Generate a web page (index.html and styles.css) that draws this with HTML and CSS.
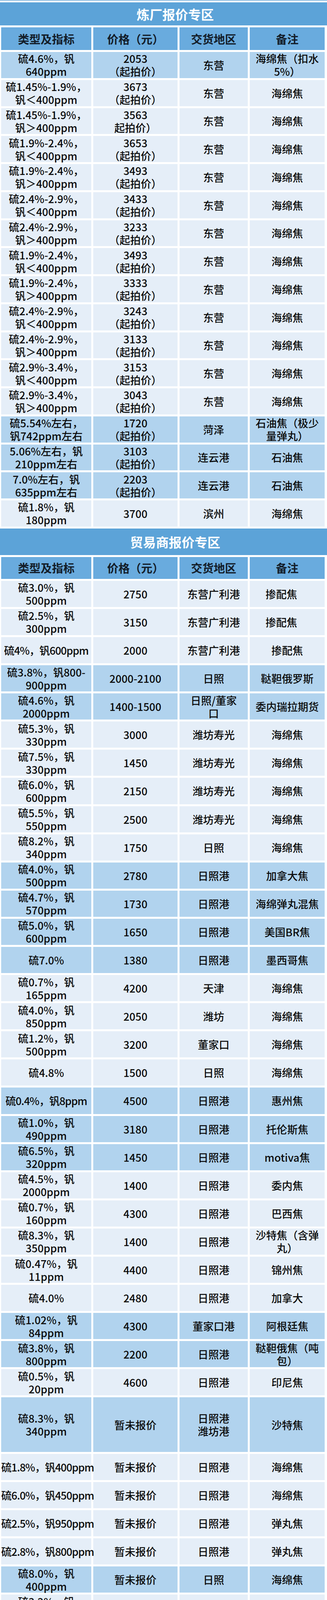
FILE: index.html
```html
<!DOCTYPE html>
<html lang="zh">
<head>
<meta charset="utf-8">
<title>报价专区</title>
<link rel="stylesheet" href="styles.css">
</head>
<body>
<div class="topline"></div>

<section class="sec sec1">
  <div class="title">炼厂报价专区</div>
  <table class="tbl">
    <colgroup><col class="c1"><col class="c2"><col class="c3"><col class="c4"></colgroup>
    <tr class="head"><td>类型及指标</td><td>价格（元）</td><td>交货地区</td><td>备注</td></tr>
    <tr class="b"><td>硫4.6%，钒<br>640ppm</td><td>2053<br>（起拍价）</td><td>东营</td><td>海绵焦（扣水<br>5%）</td></tr>
    <tr class="p"><td>硫1.45%-1.9%，<br>钒＜400ppm</td><td>3673<br>（起拍价）</td><td>东营</td><td>海绵焦</td></tr>
    <tr class="p"><td>硫1.45%-1.9%，<br>钒＞400ppm</td><td>3563<br>起拍价）</td><td>东营</td><td>海绵焦</td></tr>
    <tr class="p"><td>硫1.9%-2.4%，<br>钒＜400ppm</td><td>3653<br>（起拍价）</td><td>东营</td><td>海绵焦</td></tr>
    <tr class="p"><td>硫1.9%-2.4%，<br>钒＞400ppm</td><td>3493<br>（起拍价）</td><td>东营</td><td>海绵焦</td></tr>
    <tr class="p"><td>硫2.4%-2.9%，<br>钒＜400ppm</td><td>3433<br>（起拍价）</td><td>东营</td><td>海绵焦</td></tr>
    <tr class="p"><td>硫2.4%-2.9%，<br>钒＞400ppm</td><td>3233<br>（起拍价）</td><td>东营</td><td>海绵焦</td></tr>
    <tr class="p"><td>硫1.9%-2.4%，<br>钒＜400ppm</td><td>3493<br>（起拍价）</td><td>东营</td><td>海绵焦</td></tr>
    <tr class="p"><td>硫1.9%-2.4%，<br>钒＞400ppm</td><td>3333<br>（起拍价）</td><td>东营</td><td>海绵焦</td></tr>
    <tr class="p"><td>硫2.4%-2.9%，<br>钒＜400ppm</td><td>3243<br>（起拍价）</td><td>东营</td><td>海绵焦</td></tr>
    <tr class="p"><td>硫2.4%-2.9%，<br>钒＞400ppm</td><td>3133<br>（起拍价）</td><td>东营</td><td>海绵焦</td></tr>
    <tr class="p"><td>硫2.9%-3.4%，<br>钒＜400ppm</td><td>3153<br>（起拍价）</td><td>东营</td><td>海绵焦</td></tr>
    <tr class="p"><td>硫2.9%-3.4%，<br>钒＞400ppm</td><td>3043<br>（起拍价）</td><td>东营</td><td>海绵焦</td></tr>
    <tr class="b"><td>硫5.54%左右，<br>钒742ppm左右</td><td>1720<br>（起拍价）</td><td>菏泽</td><td>石油焦（极少<br>量弹丸）</td></tr>
    <tr class="b"><td>5.06%左右，钒<br>210ppm左右</td><td>3103<br>（起拍价）</td><td>连云港</td><td>石油焦</td></tr>
    <tr class="b"><td>7.0%左右，钒<br>635ppm左右</td><td>2203<br>（起拍价）</td><td>连云港</td><td>石油焦</td></tr>
    <tr class="p"><td>硫1.8%，钒<br>180ppm</td><td>3700</td><td>滨州</td><td>海绵焦</td></tr>
  </table>
</section>

<section class="sec sec2">
  <div class="title">贸易商报价专区</div>
  <table class="tbl">
    <colgroup><col class="c1"><col class="c2"><col class="c3"><col class="c4"></colgroup>
    <tr class="head"><td>类型及指标</td><td>价格（元）</td><td>交货地区</td><td>备注</td></tr>
    <tr class="p"><td>硫3.0%，钒<br>500ppm</td><td>2750</td><td>东营广利港</td><td class="shift">掺配焦</td></tr>
    <tr class="p"><td>硫2.5%，钒<br>300ppm</td><td>3150</td><td>东营广利港</td><td class="shift">掺配焦</td></tr>
    <tr class="p"><td class="tight">硫4%，钒600ppm</td><td>2000</td><td>东营广利港</td><td>掺配焦</td></tr>
    <tr class="b"><td>硫3.8%，钒800-<br>900ppm</td><td>2000-2100</td><td>日照</td><td>鞑靼俄罗斯</td></tr>
    <tr class="b"><td>硫4.6%，钒<br>2000ppm</td><td>1400-1500</td><td>日照/董家<br>口</td><td>委内瑞拉期货</td></tr>
    <tr class="p"><td>硫5.3%，钒<br>330ppm</td><td>3000</td><td>潍坊寿光</td><td>海绵焦</td></tr>
    <tr class="p"><td>硫7.5%，钒<br>330ppm</td><td>1450</td><td>潍坊寿光</td><td>海绵焦</td></tr>
    <tr class="p"><td>硫6.0%，钒<br>600ppm</td><td>2150</td><td>潍坊寿光</td><td>海绵焦</td></tr>
    <tr class="p"><td>硫5.5%，钒<br>550ppm</td><td>2500</td><td>潍坊寿光</td><td>海绵焦</td></tr>
    <tr class="p"><td>硫8.2%，钒<br>340ppm</td><td>1750</td><td>日照</td><td>海绵焦</td></tr>
    <tr class="b"><td>硫4.0%，钒<br>500ppm</td><td>2780</td><td>日照港</td><td>加拿大焦</td></tr>
    <tr class="b"><td>硫4.7%，钒<br>570ppm</td><td>1730</td><td>日照港</td><td>海绵弹丸混焦</td></tr>
    <tr class="b"><td>硫5.0%，钒<br>600ppm</td><td>1650</td><td>日照港</td><td>美国BR焦</td></tr>
    <tr class="b"><td>硫7.0%</td><td>1380</td><td>日照港</td><td>墨西哥焦</td></tr>
    <tr class="p"><td>硫0.7%，钒<br>165ppm</td><td>4200</td><td>天津</td><td>海绵焦</td></tr>
    <tr class="p"><td>硫4.0%，钒<br>850ppm</td><td>2050</td><td>潍坊</td><td>海绵焦</td></tr>
    <tr class="p"><td>硫1.2%，钒<br>500ppm</td><td>3200</td><td>董家口</td><td>海绵焦</td></tr>
    <tr class="p"><td>硫4.8%</td><td>1500</td><td>日照</td><td>海绵焦</td></tr>
    <tr class="b"><td class="tight">硫0.4%，钒8ppm</td><td>4500</td><td>日照港</td><td>惠州焦</td></tr>
    <tr class="b"><td>硫1.0%，钒<br>490ppm</td><td>3180</td><td>日照港</td><td>托伦斯焦</td></tr>
    <tr class="b"><td>硫6.5%，钒<br>320ppm</td><td>1450</td><td>日照港</td><td>motiva焦</td></tr>
    <tr class="p"><td>硫4.5%，钒<br>2000ppm</td><td>1400</td><td>日照港</td><td>委内焦</td></tr>
    <tr class="p"><td>硫0.7%，钒<br>160ppm</td><td>4300</td><td>日照港</td><td>巴西焦</td></tr>
    <tr class="p"><td>硫8.3%，钒<br>350ppm</td><td>1400</td><td>日照港</td><td>沙特焦（含弹<br>丸）</td></tr>
    <tr class="p"><td>硫0.47%，钒<br>11ppm</td><td>4400</td><td>日照港</td><td>锦州焦</td></tr>
    <tr class="p"><td>硫4.0%</td><td>2480</td><td>日照港</td><td>加拿大</td></tr>
    <tr class="b"><td>硫1.02%，钒<br>84ppm</td><td>4300</td><td>董家口港</td><td>阿根廷焦</td></tr>
    <tr class="b"><td>硫3.8%，钒<br>800ppm</td><td>2200</td><td>日照港</td><td>鞑靼俄焦（吨<br>包）</td></tr>
    <tr class="p"><td>硫0.5%，钒<br>20ppm</td><td>4600</td><td>日照港</td><td>印尼焦</td></tr>
    <tr class="b tall"><td>硫8.3%，钒<br>340ppm</td><td>暂未报价</td><td>日照港<br>潍坊港</td><td>沙特焦</td></tr>
    <tr class="p"><td class="tight">硫1.8%，钒400ppm</td><td>暂未报价</td><td>日照港</td><td>海绵焦</td></tr>
    <tr class="p"><td class="tight">硫6.0%，钒450ppm</td><td>暂未报价</td><td>日照港</td><td>海绵焦</td></tr>
    <tr class="p"><td class="tight">硫2.5%，钒950ppm</td><td>暂未报价</td><td>日照港</td><td>弹丸焦</td></tr>
    <tr class="p"><td class="tight">硫2.8%，钒800ppm</td><td>暂未报价</td><td>日照港</td><td>弹丸焦</td></tr>
    <tr class="b"><td>硫8.0%，钒<br>400ppm</td><td>暂未报价</td><td>日照</td><td>海绵焦</td></tr>
    <tr class="p"><td>硫3.2%，钒<br>480ppm</td><td>暂未报价</td><td>日照港</td><td>海绵焦</td></tr>
  </table>
</section>

<div class="bottomline"></div>
</body>
</html>
```

FILE: styles.css
```css
html, body {
  margin: 0;
  padding: 0;
  background: #ffffff;
}

body {
  width: 838px;
  font-family: "Noto Sans CJK SC", "Noto Sans", sans-serif;
  color: #0a0a0a;
}

.topline {
  height: 2px;
  background: #8dbde2;
  margin-bottom: 4px;
}

.bottomline {
  height: 3px;
  background: #8dbde2;
}

.title {
  display: flex;
  align-items: center;
  justify-content: center;
  padding-left: 60px;
  background: #5ca3d8;
  color: #ffffff;
  font-weight: 700;
  font-size: 33px;
}

.sec1 .title { height: 59px; }
.sec2 .title { height: 68px; }

.tbl {
  table-layout: fixed;
  border-collapse: separate;
  border-spacing: 5px;
  width: 839px;
  margin-left: -2px;
}

.c1 { width: 231px; }
.c2 { width: 216px; }
.c3 { width: 175px; }
.c4 { width: 192px; }

.tbl td {
  padding: 0;
  text-align: center;
  vertical-align: middle;
  font-size: 27px;
  font-weight: 500;
  line-height: 33px;
  white-space: nowrap;
  overflow: visible;
}

.sec1 .tbl tr { height: 66.75px; }
.sec2 .tbl tr { height: 67.1px; }
.sec1 .tbl tr.head { height: 58px; }
.sec2 .tbl tr.head { height: 56px; }
.sec2 .tbl tr.tall { height: 139.2px; }

.tbl tr.head td {
  background: #69abde;
  font-size: 29px;
  font-weight: 700;
  color: #131d29;
}

.tbl tr.p td { background: #e5eef8; }
.tbl tr.b td { background: #b1d3ee; }

.tbl td.shift { padding-right: 30px; }
.tbl td.tight { letter-spacing: -1px; }
```
